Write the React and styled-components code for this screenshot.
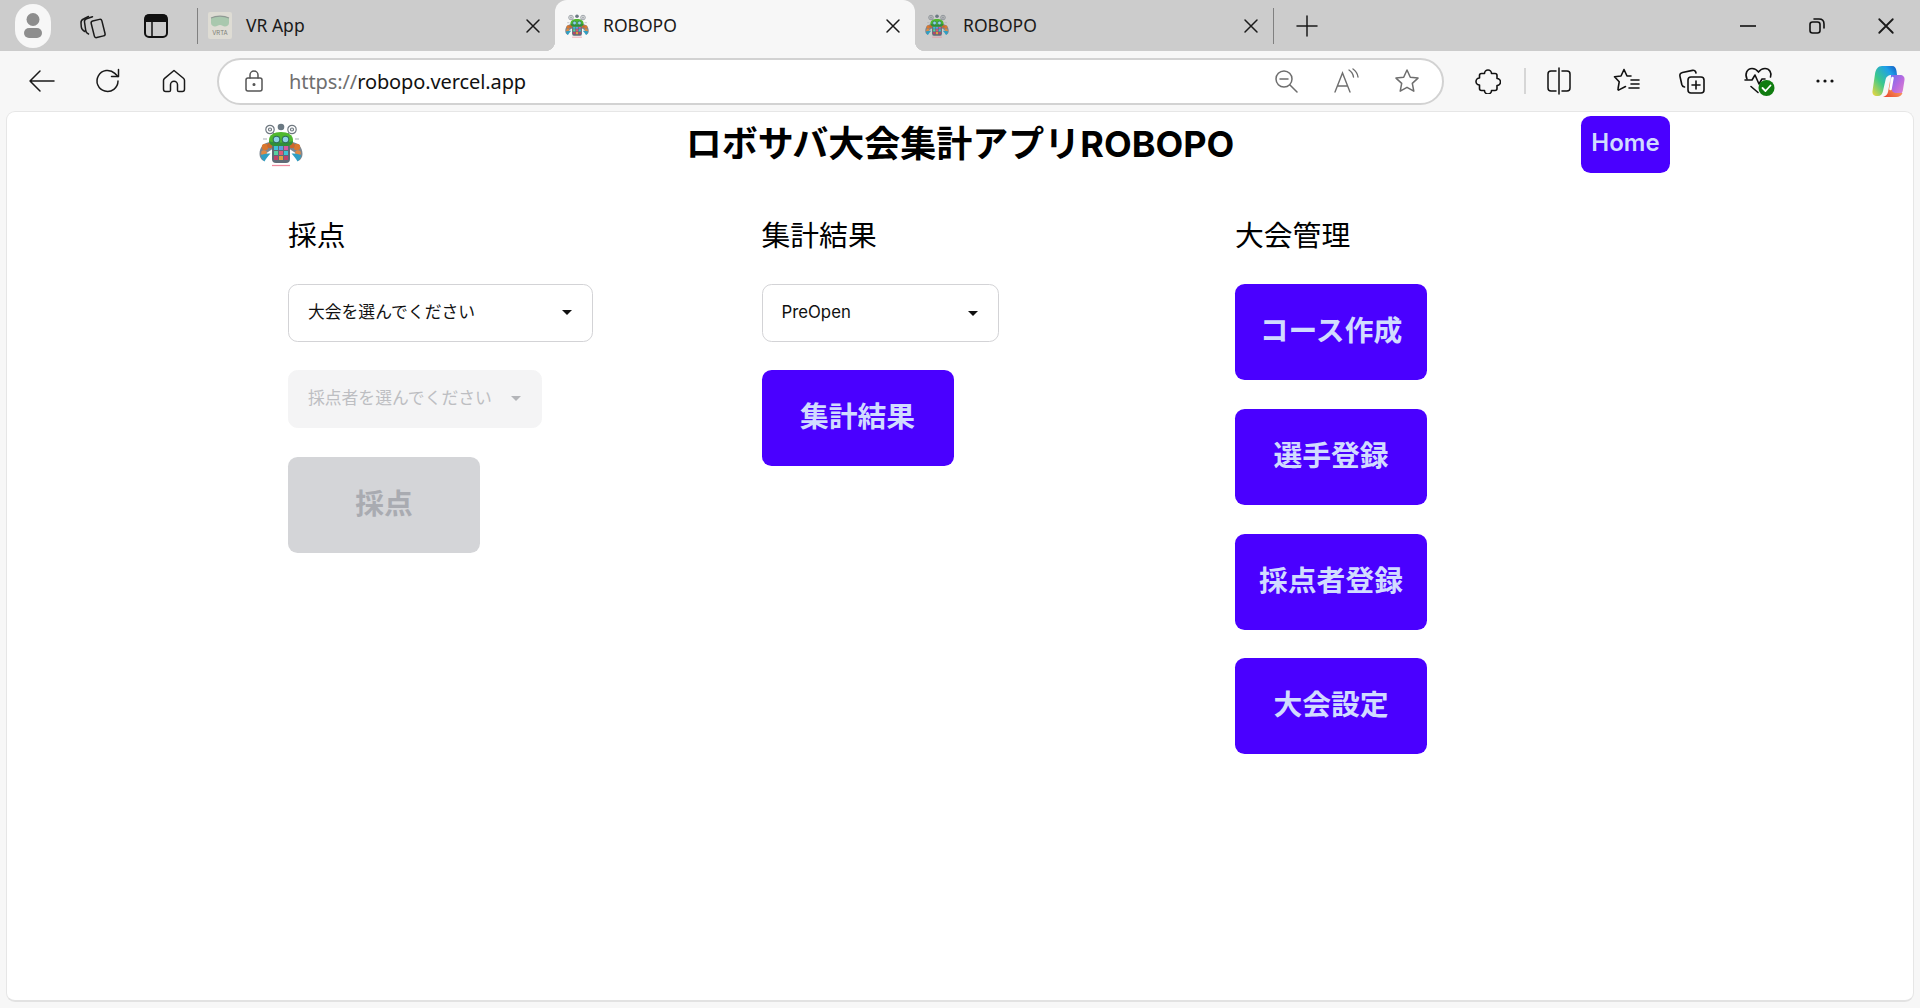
import styled, { createGlobalStyle } from "styled-components";

const GlobalStyle = createGlobalStyle`
  html, body {
    margin: 0;
    padding: 0;
    background: #f7f7f7;
  }
  * {
    box-sizing: border-box;
  }
`;

const Frame = styled.div`
  height: 100vh;
  display: flex;
  flex-direction: column;
  overflow: hidden;
  font-family: "Noto Sans", "Noto Sans CJK JP", sans-serif;
`;

// browser chrome
const TabStrip = styled.div`
  height: 51px;
  flex: none;
  display: flex;
  align-items: stretch;
  background: #cccccc;
`;

const Slot = styled.div`
  width: ${(p) => p.$w}px;
  flex: none;
  display: flex;
  align-items: center;
  justify-content: center;
  padding-left: ${(p) => p.$pad || 0}px;
`;

const Avatar = styled.div`
  width: 36px;
  height: 44px;
  border-radius: 18px;
  background: #f7f7f7;
  display: flex;
  align-items: center;
  justify-content: center;
`;

const TabDivider = styled.div`
  width: 1px;
  height: 36px;
  align-self: center;
  background: #808080;
  margin-left: ${(p) => p.$left || 0}px;
  flex: none;
`;

const Tab = styled.div`
  position: relative;
  width: ${(p) => p.$w}px;
  flex: none;
  display: flex;
  align-items: center;
  padding: 0 10px 0 10px;
  background: ${(p) => (p.$active ? "#f7f7f7" : "transparent")};
  border-radius: ${(p) => (p.$active ? "12px 12px 0 0" : "0")};
  ${(p) =>
    p.$active
      ? `
    &::before, &::after {
      content: "";
      position: absolute;
      bottom: 0;
      width: 10px;
      height: 10px;
    }
    &::before {
      left: -10px;
      background: radial-gradient(circle at 0 0, transparent 10px, #f7f7f7 10.5px);
    }
    &::after {
      right: -10px;
      background: radial-gradient(circle at 100% 0, transparent 10px, #f7f7f7 10.5px);
    }
  `
      : ""}
`;

const TabIcon = styled.div`
  width: 24px;
  height: 24px;
  flex: none;
  display: flex;
  align-items: center;
  justify-content: center;
`;

const TabTitle = styled.span`
  margin-left: 14px;
  padding-bottom: 1px;
  font-size: 17.5px;
  color: #1a1a1a;
  flex: 1;
`;

const TabClose = styled.div`
  width: 24px;
  height: 24px;
  flex: none;
  display: flex;
  align-items: center;
  justify-content: center;
`;

const Grow = styled.div`
  flex: 1;
`;

const Toolbar = styled.div`
  height: 60px;
  flex: none;
  display: flex;
  align-items: center;
  background: #f7f7f7;
  padding-left: 9px;
`;

const AddressBar = styled.div`
  width: 1227px;
  height: 47px;
  flex: none;
  margin: 0 11px 0 10px;
  display: flex;
  align-items: center;
  background: #ffffff;
  border: 2px solid #d2d2d2;
  border-radius: 24px;
`;

const Url = styled.div`
  flex: 1;
  font-size: 20px;
  color: #111;
  letter-spacing: -0.1px;
`;

const UrlScheme = styled.span`
  color: #6f6f6f;
`;

const ToolDivider = styled.div`
  width: 2px;
  height: 26px;
  margin: 0 3px;
  flex: none;
  background: #d6d6d6;
`;

// page
const Page = styled.div`
  flex: 1;
  margin: 0 6px 6px;
  background: #ffffff;
  border: 1px solid #e6e6e6;
  border-bottom: 2px solid #e2e2e2;
  border-radius: 9px;
  font-family: Inter, "Noto Sans CJK JP", sans-serif;
`;

const Container = styled.div`
  width: 1420px;
  margin: 0 auto;
`;

const Header = styled.header`
  display: grid;
  grid-template-columns: 1fr auto 1fr;
  align-items: center;
  height: 57px;
  margin-top: 4px;
`;

const Logo = styled.div`
  margin-left: 9px;
  display: flex;
`;

const Title = styled.h1`
  margin: 0;
  padding-bottom: 2px;
  font-size: 36px;
  font-weight: 700;
  color: #000;
  line-height: 50px;
  font-family: Inter, "Noto Sans CJK JP", sans-serif;
`;

const HomeButton = styled.button`
  justify-self: end;
  width: 89px;
  height: 57px;
  border: none;
  border-radius: 9.6px;
  background: #4a00ff;
  color: #d1dbff;
  font-family: Inter, sans-serif;
  font-size: 24px;
  font-weight: 600;
  padding: 0 0 4px;
`;

const Columns = styled.main`
  display: grid;
  grid-template-columns: repeat(3, 473.5px);
  padding: 42.2px 0 0 38px;
`;

const Column = styled.section`
  display: flex;
  flex-direction: column;
  align-items: flex-start;
  gap: 28.8px;
`;

const Heading = styled.h2`
  margin: 0;
  height: 40px;
  line-height: 42px;
  font-size: 28.8px;
  font-weight: 400;
  color: #000;
`;

const Select = styled.div`
  width: ${(p) => p.$w}px;
  height: 57.6px;
  padding: 0 20px ${(p) => p.$bottom ?? 3}px 19px;
  display: flex;
  align-items: center;
  justify-content: space-between;
  font-size: 16.8px;
  border-radius: 9.6px;
  color: ${(p) => (p.$disabled ? "#bdbec2" : "#111")};
  background: ${(p) => (p.$disabled ? "#f4f4f5" : "#fff")};
  border: 1px solid ${(p) => (p.$disabled ? "#f4f4f5" : "#d3d3d6")};
`;

const Caret = styled.span`
  width: 0;
  height: 0;
  margin-top: 3px;
  border-left: 5px solid transparent;
  border-right: 5px solid transparent;
  border-top: 5px solid ${(p) => (p.$disabled ? "#b4b5b9" : "#111")};
`;

const BigButton = styled.button`
  width: 192px;
  height: 96px;
  padding: 0 0 7px;
  border: none;
  border-radius: 9.6px;
  font-family: Inter, "Noto Sans CJK JP", sans-serif;
  font-size: 28.8px;
  font-weight: 700;
  background: ${(p) => (p.disabled ? "#d4d5d8" : "#4a00ff")};
  color: ${(p) => (p.disabled ? "#a9abb1" : "#d1dbff")};
`;

const ink = "#1a1a1a";

function Svg({ size = 24, box = 24, color = ink, width = 1.5, children }) {
  return (
    <svg
      width={size}
      height={size}
      viewBox={`0 0 ${box} ${box}`}
      fill="none"
      stroke={color}
      strokeWidth={width}
      strokeLinecap="round"
      strokeLinejoin="round"
    >
      {children}
    </svg>
  );
}

const CloseIcon = ({ size = 16, width = 1.5 }) => (
  <Svg size={size} box={16} width={width}>
    <path d="M2 2 L14 14 M14 2 L2 14" />
  </Svg>
);

const ProfileIcon = () => (
  <svg width="18" height="25" viewBox="0 0 18 25" fill="#8e8e8e">
    <circle cx="9" cy="6.500" r="6.500" />
    <rect x="0" y="15" width="18" height="10" rx="5" />
  </svg>
);

const WorkspacesIcon = () => (
  <Svg size={30} box={30} width={1.5}>
    <g transform="translate(2 1)">
      <rect x="13.500" y="8" width="11" height="17" rx="2" transform="rotate(-14 19 16)" />
      <path d="M9.500 22c-1.600-.6-2.400-1.400-2.700-3L5.500 10c-.3-1.600.5-2.700 2-3.200l6-2" />
      <path d="M5.800 19.500C3.500 18.500 2.600 17 2.300 15L2 11c-.2-2 .8-3.200 2.500-4l5-2.500" />
    </g>
  </Svg>
);

const VerticalTabsIcon = () => (
  <svg width="26" height="26" viewBox="0 0 26 26" fill="none" stroke="#111" strokeWidth="2">
    <rect x="2" y="2" width="22" height="22" rx="4" />
    <path d="M3 3.500h20v4.500H3z" fill="#111" />
    <path d="M9 8v16" strokeWidth="1.500" />
  </svg>
);

const PlusIcon = () => (
  <Svg size={22} box={22}>
    <path d="M11 1v20M1 11h20" />
  </Svg>
);

const MinimizeIcon = () => (
  <svg width="16" height="16" viewBox="0 0 16 16">
    <path d="M0 8h16" stroke="#111" strokeWidth="1.600" />
  </svg>
);

const RestoreIcon = () => (
  <Svg size={18} box={18} color="#111" width={1.6}>
    <rect x="2" y="5" width="10" height="11" rx="2.500" />
    <path d="M6 2h5c3 0 5 2 5 5v4" />
  </Svg>
);

const BackIcon = () => (
  <Svg size={28} box={28}>
    <path d="M2 14h24M12 4 2 14l10 10" />
  </Svg>
);

const ReloadIcon = () => (
  <Svg size={28} box={28}>
    <path d="M24 14a10.500 10.500 0 1 1-3.200-7.600L24 9.500" />
    <path d="M24.500 2.500v7h-7" />
  </Svg>
);

const HomeIcon = () => (
  <Svg size={26} box={26}>
    <path d="M13 2.500 3.600 10.300c-.7.600-1.100 1.300-1.100 2.200v8.700c0 1.300 1 2.300 2.300 2.300h3.400c.7 0 1.300-.6 1.300-1.300v-5.400c0-1.900 1.600-3.500 3.500-3.500s3.500 1.600 3.500 3.500v5.400c0 .7.600 1.300 1.300 1.300h3.400c1.300 0 2.300-1 2.300-2.300v-8.700c0-.9-.4-1.600-1.100-2.200z" />
  </Svg>
);

const LockIcon = () => (
  <Svg size={24} box={24} color="#555">
    <rect x="4" y="9" width="16" height="13" rx="2" />
    <path d="M8 9V6a4 4 0 0 1 8 0v3" />
    <circle cx="12" cy="15.500" r="0.800" fill="#555" />
  </Svg>
);

const ZoomOutIcon = () => (
  <Svg size={24} box={24} color="#6e6e6e">
    <circle cx="10" cy="10" r="8" />
    <path d="M6 10h8M16 16l7 7" />
  </Svg>
);

const ReadAloudIcon = () => (
  <svg width="26" height="26" viewBox="0 0 26 26" fill="none" stroke="#6e6e6e" strokeWidth="1.400" strokeLinecap="round">
    <path d="M2 24 9.500 5 17 24M4.500 18h10" />
    <path d="M16 2c2.400 1.500 4 4 4.500 7M20 1c3 2 4.500 4.500 5 8" />
  </svg>
);

const StarIcon = () => (
  <Svg size={26} box={26} color="#6e6e6e">
    <path d="m13 2 3.300 7.200 7.700.9-5.700 5.300 1.500 7.800L13 19.300 6.200 23.200l1.500-7.800L2 10.100l7.700-.9z" />
  </Svg>
);

const ExtensionIcon = () => (
  <Svg size={26} box={26} color="#111" width={1.6}>
    <path d="M9.500 5.500a3.500 3.500 0 1 1 7 0h3.500a2 2 0 0 1 2 2v3a3.500 3.500 0 1 1 0 7v3a2 2 0 0 1-2 2h-3.500a3.500 3.500 0 1 1-7 0h-3a2 2 0 0 1-2-2v-3.500a3.500 3.500 0 1 1 0-7V7.500a2 2 0 0 1 2-2z" />
  </Svg>
);

const SplitIcon = () => (
  <Svg size={28} box={28} color="#111" width={1.5}>
    <path d="M11 4H6a3 3 0 0 0-3 3v14a3 3 0 0 0 3 3h5M17 4h5a3 3 0 0 1 3 3v14a3 3 0 0 1-3 3h-5M14 1v26" />
  </Svg>
);

const FavoritesIcon = () => (
  <Svg size={28} box={28} color="#111" width={1.6}>
    <path d="m11 2.500 3 6.500h4M11 2.500 8 9l-6.500.8 4.700 5L5 22c-.2 1 .3 1.300 1 .9l6.500-3.400M18 13h8M18 17h8M16 21h10" />
  </Svg>
);

const CollectionsIcon = () => (
  <Svg size={28} box={28} color="#111" width={1.6}>
    <rect x="10" y="10" width="16" height="16" rx="3" />
    <path d="M18 14v8M14 18h8" />
    <path d="M18 6c-.3-1.800-1.500-3-3.500-2.600L4.500 5.500C2.500 6 1.500 7.500 2 9.500l1.800 8c.3 1.200 1.200 2.200 2.700 2.500" />
  </Svg>
);

const HealthIcon = () => (
  <svg width="32" height="32" viewBox="0 0 32 32" fill="none">
    <path
      d="M4 14C1.500 9 4 3.500 9 3.500c3 0 5 1.500 6.500 3.500C17 5 19 3.500 22 3.500c4.500 0 7 4.500 5.500 8.500M8 21.500l7 6"
      stroke="#111"
      strokeWidth="1.600"
      strokeLinecap="round"
    />
    <path d="M2 15h7l3-5 4 9 3-5h3" stroke="#111" strokeWidth="1.600" strokeLinecap="round" strokeLinejoin="round" />
    <circle cx="23.500" cy="23" r="8" fill="#107c10" />
    <path d="m19.500 23 3 3 5-5.500" stroke="#fff" strokeWidth="1.800" strokeLinecap="round" strokeLinejoin="round" />
  </svg>
);

const MoreIcon = () => (
  <svg width="20" height="6" viewBox="0 0 20 6" fill="#111">
    <circle cx="3" cy="3" r="1.600" />
    <circle cx="10" cy="3" r="1.600" />
    <circle cx="17" cy="3" r="1.600" />
  </svg>
);

const CopilotIcon = () => (
  <svg width="33" height="33" viewBox="0 0 33 33">
    <defs>
      <linearGradient id="cpA" x1="0" y1="1" x2="1" y2="0">
        <stop offset="0" stopColor="#f5d63a" />
        <stop offset="0.4" stopColor="#3cc98a" />
        <stop offset="0.75" stopColor="#1fa0e8" />
        <stop offset="1" stopColor="#1255c0" />
      </linearGradient>
      <linearGradient id="cpB" x1="0" y1="0" x2="1" y2="1">
        <stop offset="0" stopColor="#6a70f0" />
        <stop offset="0.5" stopColor="#b86ae0" />
        <stop offset="1" stopColor="#ea8ac8" />
      </linearGradient>
      <linearGradient id="cpC" x1="0" y1="1" x2="1" y2="0">
        <stop offset="0" stopColor="#e8402a" />
        <stop offset="0.6" stopColor="#f7925a" />
        <stop offset="1" stopColor="#f5b8d8" />
      </linearGradient>
    </defs>
    <path d="M19 10h9c3 0 5 2 4.500 5l-1.500 9.500c-.6 4-3 7-7 7h-6z" fill="url(#cpB)" />
    <path d="M10 1h10c3 0 4 2 4.500 5l.5 4h-5c-4 0-6 2-6.500 5L11 26c-.5 3-2.500 5-5 5H5c-3 0-5-2-4.500-5L3 9C3.700 4 6 1 10 1z" fill="url(#cpA)" />
    <path d="M18 16 16 27c-.5 2.500-2.500 4.500-5 5h13c3.500 0 5.500-1.500 6.500-4h-6c-3 0-5-2-5-5z" fill="url(#cpC)" />
    <path d="M20.500 13 18.500 24" stroke="#fff" strokeWidth="2.500" strokeLinecap="round" />
  </svg>
);

const RobotLogo = ({ size = 44 }) => (
  <svg width={size} height={size} viewBox="0 0 44 44">
    <g fill="none" stroke="#6f7880" strokeWidth="1.200">
      <circle cx="11" cy="6.500" r="4.200" />
      <circle cx="33" cy="6.500" r="4.200" />
      <circle cx="11" cy="6.500" r="1.500" />
      <circle cx="33" cy="6.500" r="1.500" />
      <path d="M14 10c2 1 3 2 4 4M30 10c-2 1-3 2-4 4" />
    </g>
    <circle cx="22" cy="4" r="3.300" fill="#6a7882" />
    <path d="M4 16h4M36 16h4" stroke="#a7adb3" strokeWidth="1.200" />
    <path d="M12 19C5 19 0.500 24 0.500 31c0 3 1.500 5.500 4 7l3-8 6-4z" fill="#7c8690" />
    <path d="M32 19c7 0 11.500 5 11.500 12 0 3-1.500 5.500-4 7l-3-8-6-4z" fill="#7c8690" />
    <circle cx="6" cy="24" r="3.200" fill="#d9772f" />
    <circle cx="11" cy="22.500" r="2.800" fill="#c9682c" />
    <circle cx="5" cy="30" r="2.800" fill="#e08a45" />
    <circle cx="38" cy="24" r="3.200" fill="#d9772f" />
    <circle cx="33" cy="22.500" r="2.800" fill="#c9682c" />
    <circle cx="39" cy="30" r="2.800" fill="#e08a45" />
    <path d="M2 32c0 3 1.500 5 3.500 6.500 1.500-2.500 3-5 6-8-3 0-6 0-9.500 1.500zM42 32c0 3-1.500 5-3.500 6.500-1.500-2.500-3-5-6-8 3 0 6 0 9.500 1.500z" fill="#2f9fc4" />
    <rect x="13" y="20" width="18" height="20" rx="4" fill="#5f6a76" />
    <rect x="15" y="23" width="4" height="4" fill="#3ec3d6" />
    <rect x="20" y="23" width="4" height="4" fill="#5aa0e0" />
    <rect x="25" y="23" width="4" height="4" fill="#d65aa0" />
    <rect x="15" y="28" width="4" height="4" fill="#5ad0a0" />
    <rect x="20" y="28" width="4" height="4" fill="#e05a78" />
    <rect x="25" y="28" width="4" height="4" fill="#3ec3d6" />
    <rect x="15" y="33" width="4" height="4" fill="#c0406a" />
    <rect x="20" y="33" width="4" height="4" fill="#e0a040" />
    <rect x="25" y="33" width="4" height="4" fill="#c0406a" />
    <path d="M10 17c0-5 5-8 12-8s12 3 12 8c0 4-3 6-6 6H16c-3 0-6-2-6-6z" fill="#4fb82e" />
    <path d="M10 18c0 3 3 5 6 5h12c3 0 6-2 6-5-4 2-20 2-24 0z" fill="#2f8f3a" />
    <circle cx="17.500" cy="16.500" r="3.300" fill="#8fd3e8" stroke="#2f6f5a" strokeWidth="1.100" />
    <circle cx="26.500" cy="16.500" r="3.300" fill="#8fd3e8" stroke="#2f6f5a" strokeWidth="1.100" />
    <path d="M13 42.500h18" stroke="#ee8a9e" strokeWidth="1.300" />
  </svg>
);

const VrFavicon = () => (
  <svg width="24" height="27" viewBox="0 0 24 27">
    <rect width="24" height="27" rx="2" fill="#dedcd4" />
    <path d="M3 6c5-2.500 13-2.500 18 0v5c0 2-2 3.500-4 3.500-2 0-3-1.500-5-1.500s-3 1.500-5 1.500c-2 0-4-1.500-4-3.500z" fill="#a9c8ae" />
    <path d="M3 6c5-2.500 13-2.500 18 0" stroke="#8f9a94" strokeWidth="1.200" fill="none" />
    <text x="12" y="23" textAnchor="middle" fontSize="6" fontFamily="Inter, sans-serif" fill="#7c7c74">
      VRTA
    </text>
  </svg>
);

const managementButtons = ["コース作成", "選手登録", "採点者登録", "大会設定"];

export default function App() {
  return (
    <Frame>
      <GlobalStyle />
      <TabStrip>
        <Slot $w={66}>
          <Avatar>
            <ProfileIcon />
          </Avatar>
        </Slot>
        <Slot $w={52}>
          <WorkspacesIcon />
        </Slot>
        <Slot $w={76}>
          <VerticalTabsIcon />
        </Slot>
        <TabDivider $left={3} />
        <Tab $w={357}>
          <TabIcon>
            <VrFavicon />
          </TabIcon>
          <TabTitle>VR App</TabTitle>
          <TabClose>
            <CloseIcon />
          </TabClose>
        </Tab>
        <Tab $w={360} $active>
          <TabIcon>
            <RobotLogo size={24} />
          </TabIcon>
          <TabTitle>ROBOPO</TabTitle>
          <TabClose>
            <CloseIcon />
          </TabClose>
        </Tab>
        <Tab $w={358}>
          <TabIcon>
            <RobotLogo size={24} />
          </TabIcon>
          <TabTitle>ROBOPO</TabTitle>
          <TabClose>
            <CloseIcon />
          </TabClose>
        </Tab>
        <TabDivider />
        <Slot $w={65}>
          <PlusIcon />
        </Slot>
        <Grow />
        <Slot $w={69}>
          <MinimizeIcon />
        </Slot>
        <Slot $w={69}>
          <RestoreIcon />
        </Slot>
        <Slot $w={69}>
          <CloseIcon size={18} width={1.6} />
        </Slot>
      </TabStrip>

      <Toolbar>
        <Slot $w={66}>
          <BackIcon />
        </Slot>
        <Slot $w={66}>
          <ReloadIcon />
        </Slot>
        <Slot $w={66}>
          <HomeIcon />
        </Slot>
        <AddressBar>
          <Slot $w={70}>
            <LockIcon />
          </Slot>
          <Url>
            <UrlScheme>https://</UrlScheme>robopo.vercel.app
          </Url>
          <Slot $w={58}>
            <ZoomOutIcon />
          </Slot>
          <Slot $w={62}>
            <ReadAloudIcon />
          </Slot>
          <Slot $w={59}>
            <StarIcon />
          </Slot>
          <Slot $w={6} />
        </AddressBar>
        <Slot $w={66}>
          <ExtensionIcon />
        </Slot>
        <ToolDivider />
        <Slot $w={60}>
          <SplitIcon />
        </Slot>
        <Slot $w={76}>
          <FavoritesIcon />
        </Slot>
        <Slot $w={54}>
          <CollectionsIcon />
        </Slot>
        <Slot $w={80}>
          <HealthIcon />
        </Slot>
        <Slot $w={52}>
          <MoreIcon />
        </Slot>
        <Slot $w={69} $pad={5}>
          <CopilotIcon />
        </Slot>
      </Toolbar>

      <Page>
        <Container>
          <Header>
            <Logo>
              <RobotLogo />
            </Logo>
            <Title>ロボサバ大会集計アプリROBOPO</Title>
            <HomeButton>Home</HomeButton>
          </Header>
          <Columns>
            <Column>
              <Heading>採点</Heading>
              <Select $w={305}>
                大会を選んでください
                <Caret />
              </Select>
              <Select $w={254} $disabled $bottom={5}>
                採点者を選んでください
                <Caret $disabled />
              </Select>
              <BigButton disabled>採点</BigButton>
            </Column>
            <Column>
              <Heading>集計結果</Heading>
              <Select $w={237} $bottom={1}>
                PreOpen
                <Caret />
              </Select>
              <BigButton>集計結果</BigButton>
            </Column>
            <Column>
              <Heading>大会管理</Heading>
              {managementButtons.map((label) => (
                <BigButton key={label}>{label}</BigButton>
              ))}
            </Column>
          </Columns>
        </Container>
      </Page>
    </Frame>
  );
}
